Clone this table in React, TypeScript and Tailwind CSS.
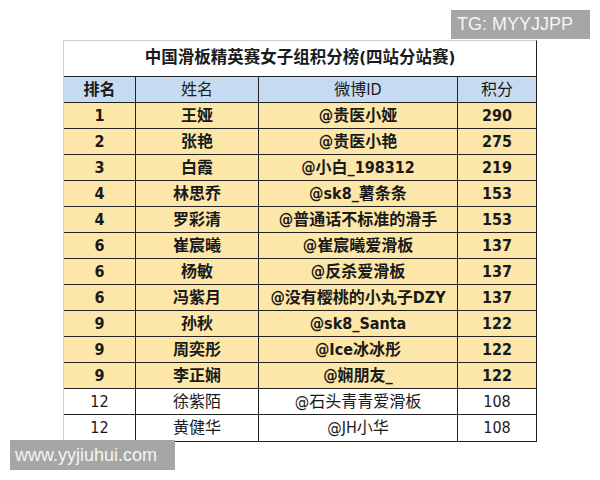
import React from "react";

type Row = { rank: string; name: string; id: string; score: string; bold: boolean };

const rows: Row[] = [
  { rank: "1", name: "王娅", id: "@贵医小娅", score: "290", bold: true },
  { rank: "2", name: "张艳", id: "@贵医小艳", score: "275", bold: true },
  { rank: "3", name: "白霞", id: "@小白_198312", score: "219", bold: true },
  { rank: "4", name: "林思乔", id: "@sk8_薯条条", score: "153", bold: true },
  { rank: "4", name: "罗彩清", id: "@普通话不标准的滑手", score: "153", bold: true },
  { rank: "6", name: "崔宸曦", id: "@崔宸曦爱滑板", score: "137", bold: true },
  { rank: "6", name: "杨敏", id: "@反杀爱滑板", score: "137", bold: true },
  { rank: "6", name: "冯紫月", id: "@没有樱桃的小丸子DZY", score: "137", bold: true },
  { rank: "9", name: "孙秋", id: "@sk8_Santa", score: "122", bold: true },
  { rank: "9", name: "周奕彤", id: "@Ice冰冰彤", score: "122", bold: true },
  { rank: "9", name: "李正娴", id: "@娴朋友_", score: "122", bold: true },
  { rank: "12", name: "徐紫陌", id: "@石头青青爱滑板", score: "108", bold: false },
  { rank: "12", name: "黄健华", id: "@JH小华", score: "108", bold: false },
];

const font = { fontFamily: '"DejaVu Sans Condensed", "DejaVu Sans", "Noto Sans CJK SC", sans-serif' };

export default function App() {
  return (
    <div className="relative w-[600px] h-[480px] bg-white overflow-hidden" style={font}>
      <div className="pt-[40px] pl-[63px]">
        <div className="w-[474px] border-t border-l border-t-[#cfcfcf] border-l-[#cfcfcf] border-r-[1.5px] border-r-[#222] border-b-[1.5px] border-b-[#222] text-[#1a1a1a]">
          <div className="h-[36px] flex items-center justify-center text-[16.5px] font-bold bg-white border-b-[1.5px] border-[#222]">
            中国滑板精英赛女子组积分榜(四站分站赛)
          </div>
          <div className="grid grid-cols-[72px_123px_199px_1fr] h-[26px] bg-[#c6daf1] border-b-[1.5px] border-[#222] text-[16px]">
            <div className="flex items-center justify-center font-bold border-r-[1.5px] border-[#222]">排名</div>
            <div className="flex items-center justify-center border-r-[1.5px] border-[#222]">姓名</div>
            <div className="flex items-center justify-center border-r-[1.5px] border-[#222]">微博ID</div>
            <div className="flex items-center justify-center">积分</div>
          </div>
          {rows.map((r, i) => (
            <div
              key={i}
              className={
                "grid grid-cols-[72px_123px_199px_1fr] h-[26px] text-[16px] " +
                (r.bold ? "bg-[#fde7a8] font-bold " : "bg-white ") +
                (i < rows.length - 1 ? "border-b-[1.5px] border-[#222]" : "")
              }
            >
              <div className="flex items-center justify-center border-r-[1.5px] border-[#222]">{r.rank}</div>
              <div className="flex items-center justify-center border-r-[1.5px] border-[#222]">{r.name}</div>
              <div className="flex items-center justify-center border-r-[1.5px] border-[#222] whitespace-nowrap">{r.id}</div>
              <div className="flex items-center justify-center">{r.score}</div>
            </div>
          ))}
        </div>
      </div>
      <div
        className="absolute left-[451px] top-[10px] w-[139px] h-[29px] bg-[#a6a6a6] text-[#f4f4f4] text-[18px] flex items-center pl-[6px]"
        style={{ fontFamily: '"Liberation Sans", sans-serif' }}
      >
        TG: MYYJJPP
      </div>
      <div
        className="absolute left-[10px] top-[440px] w-[165px] h-[30px] bg-[#a6a6a6] text-[#f4f4f4] text-[18px] flex items-center pl-[5px]"
        style={{ fontFamily: '"Liberation Sans", sans-serif' }}
      >
        www.yyjiuhui.com
      </div>
    </div>
  );
}
